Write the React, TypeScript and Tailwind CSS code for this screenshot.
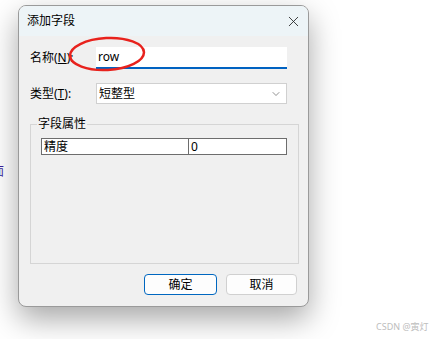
import { ChevronDown, X } from 'lucide-react';

const FONT = { fontFamily: '"Noto Sans", "Noto Sans CJK SC", sans-serif' };

export default function App() {
  return (
    <div
      className="relative w-[436px] h-[339px] overflow-hidden bg-white text-black"
      style={FONT}
    >
      {/* partial text behind the dialog */}
      <div className="absolute left-[-8px] top-[165px] text-[12px] leading-[14px] text-[#3b1f9c]">
        面
      </div>

      <div className="pl-[18px] pt-[5px]">
        <div className="relative w-[291px] h-[302px] rounded-[8px] border border-[#9a9a9a] bg-[#f0f0f0] shadow-[0_12px_30px_rgba(0,0,0,0.35)] overflow-hidden flex flex-col">
          {/* title bar */}
          <div className="h-[30px] bg-[#edf4f7] flex items-center justify-between pl-[8px] pr-[6px]">
            <span className="text-[12px] leading-none">添加字段</span>
            <X className="w-[17px] h-[17px] text-[#222]" strokeWidth={1.2} />
          </div>

          <div className="flex flex-col pt-[11px] px-[10px]">
            {/* name */}
            <div className="flex items-center h-[22px]">
              <span className="w-[67px] pl-[1px] text-[12px]">
                名称(<span className="underline">N</span>):
              </span>
              <div className="w-[191px] h-[22px] bg-white border-b-2 border-[#0062c1] flex items-center pl-[2px]">
                <span className="text-[12px]">row</span>
              </div>
            </div>

            {/* type */}
            <div className="flex items-center h-[21px] mt-[14px]">
              <span className="w-[67px] pl-[1px] text-[12px]">
                类型(<span className="underline">T</span>):
              </span>
              <div className="w-[191px] h-[21px] bg-white border border-[#d0d0d0] flex items-center justify-between pl-[2px] pr-[4px]">
                <span className="text-[12px]">短整型</span>
                <ChevronDown className="w-[12px] h-[12px] text-[#555]" strokeWidth={1.3} />
              </div>
            </div>

            {/* group box */}
            <div className="relative mt-[20px] ml-[1px] w-[269px] h-[140px] border border-[#d5d5d5]">
              <span className="absolute left-[6px] top-[-9px] px-[1px] bg-[#f0f0f0] text-[12px] leading-[16px]">
                字段属性
              </span>
              <div className="mt-[13px] ml-[10px] w-[246px] h-[17px] flex border border-[#6d6d6d] bg-white text-[12px] leading-[15px]">
                <div className="w-[147px] border-r border-[#6d6d6d] pl-[2px]">精度</div>
                <div className="flex-1 pl-[2px]">0</div>
              </div>
            </div>

            {/* buttons */}
            <div className="flex justify-end gap-[9px] mt-[10px] pr-[1px]">
              <button className="w-[73px] h-[21px] rounded-[4px] border border-[#0067c0] bg-[#fdfdfd] text-[12px] leading-none">
                确定
              </button>
              <button className="w-[71px] h-[21px] rounded-[4px] border border-[#d0d0d0] bg-[#fdfdfd] text-[12px] leading-none">
                取消
              </button>
            </div>
          </div>
        </div>
      </div>

      {/* red annotation ellipse */}
      <svg className="absolute left-[68px] top-[36px]" width="80" height="36" viewBox="0 0 80 36">
        <ellipse cx="39" cy="18" rx="37" ry="16" fill="none" stroke="#e8221d" strokeWidth="2.5" transform="rotate(-3 39 18)" />
      </svg>

      <div className="absolute left-[376px] top-[320px] text-[9px] text-[#bdbdbd]">CSDN @寅灯</div>
    </div>
  );
}
